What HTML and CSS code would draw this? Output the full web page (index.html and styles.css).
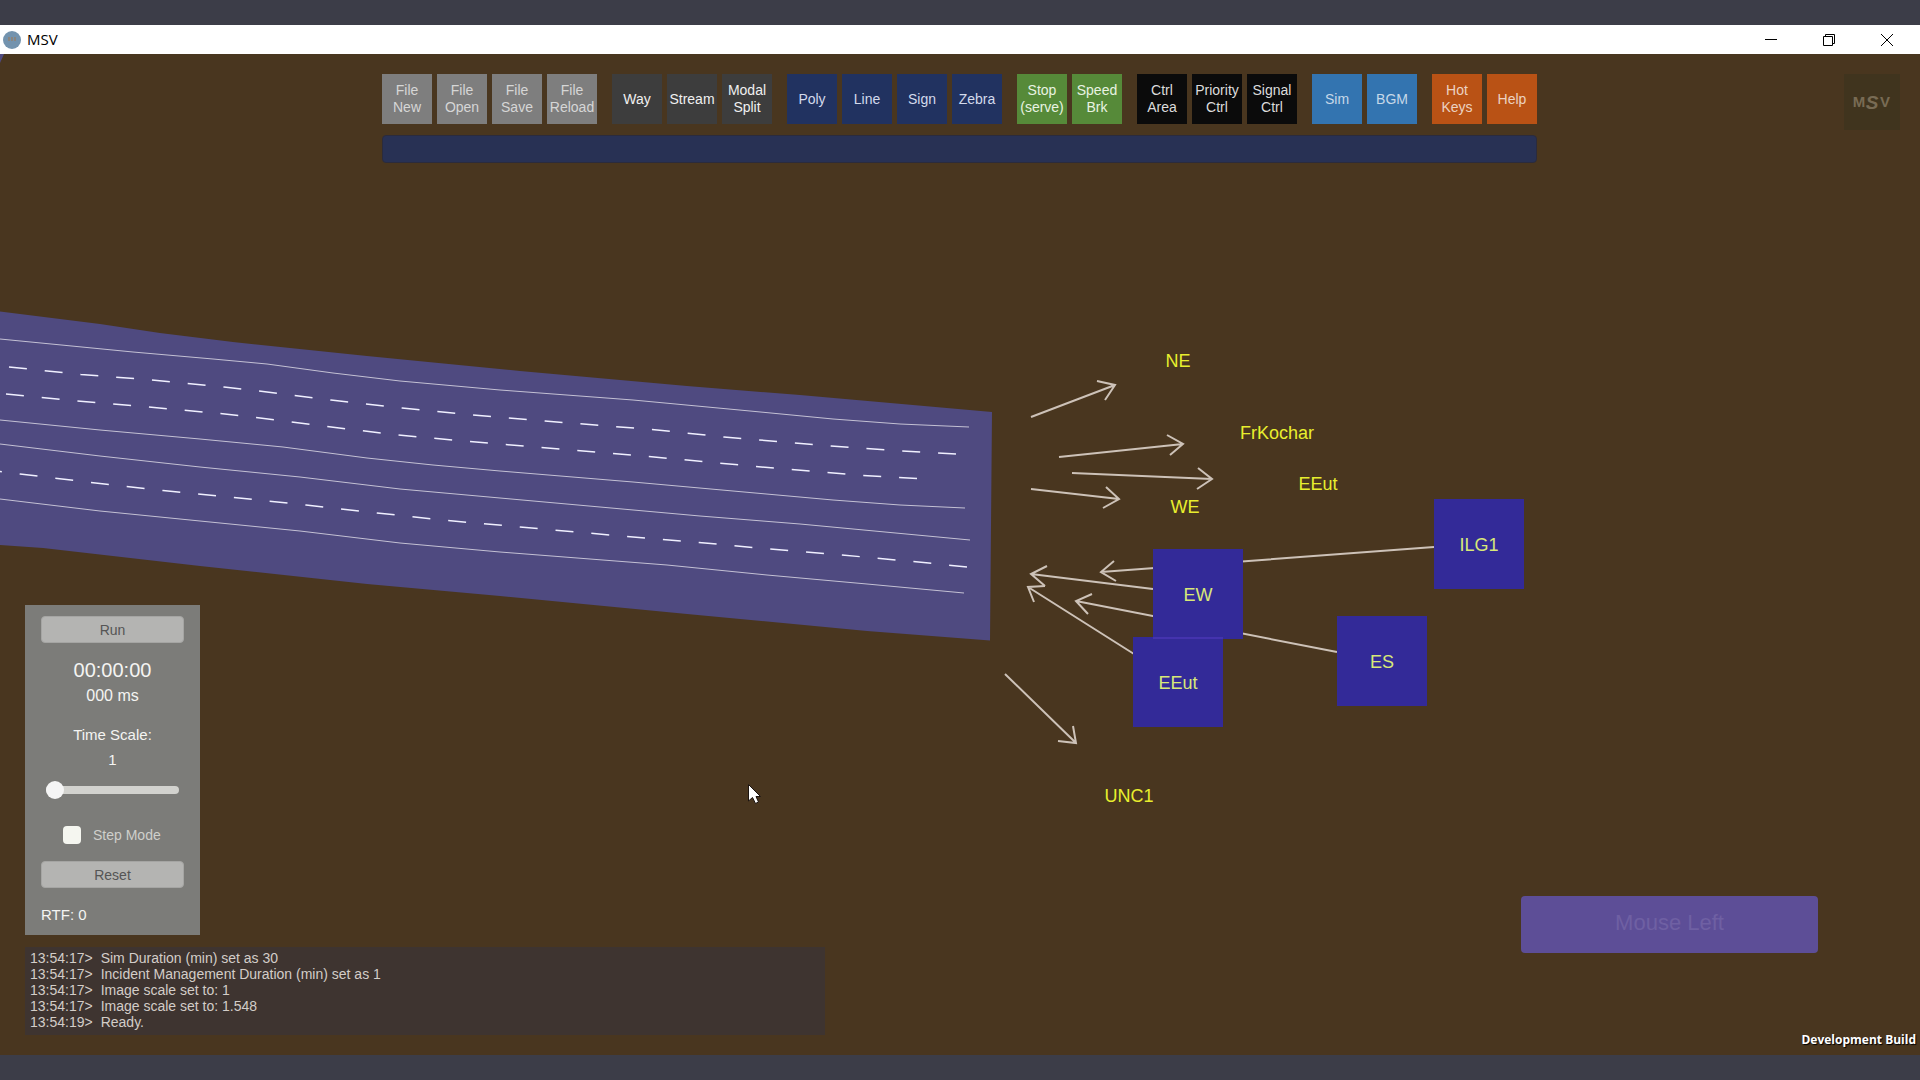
FILE: index.html
```
<!DOCTYPE html>
<html lang="en">
<head>
    <meta charset="utf-8">
    <title>MSV</title>
    <link rel="stylesheet" href="styles.css">
</head>
<body>
    <div class="window">
        <div class="titlebar">
            <svg class="app-icon" width="18" height="18" viewBox="0 0 18 18">
                <circle cx="9" cy="9" r="9" fill="#7393ae"/>
                <path d="M5 7h8M5 9h8" stroke="#8a857f" stroke-width="2" stroke-dasharray="2 1"/>
            </svg>
            <span class="app-name">MSV</span>
            <div class="window-buttons">
                <button type="button" aria-label="Minimize">
                    <svg width="12" height="12" viewBox="0 0 12 12"><path d="M0 5.5h12"/></svg>
                </button>
                <button type="button" aria-label="Restore">
                    <svg width="12" height="12" viewBox="0 0 12 12"><path d="M.5 2.5h9v9h-9zM2.5 2.5v-2h9v9h-2"/></svg>
                </button>
                <button type="button" aria-label="Close">
                    <svg width="12" height="12" viewBox="0 0 12 12"><path d="M0 0l12 12M12 0L0 12"/></svg>
                </button>
            </div>
        </div>

        <div class="stage">
            <svg class="map" viewBox="0 54 1920 1001" preserveAspectRatio="xMinYMin slice">
                <!-- road surface -->
                <path class="road" d="M0 54H4L0 63Z"/>
                <path class="road" d="M0 311.5L100 324L160 333L233 342L367 356L520 371L687 386L800 395L992 412L990 640.5L867 631L687 614L500 596L367 584L200 566L43 548L0 545Z"/>

                <!-- solid lane lines -->
                <path class="lane" d="M0 339L133 352L213 359L267 364L333 373L400 381L500 390L633 400L750 411L833 419L900 424L969 427"/>
                <path class="lane" d="M0 420L100 430L200 439L283 447L367 458L433 465L500 471L633 482L733 491L833 500L900 505L965 508"/>
                <path class="lane" d="M0 444L100 456L200 467L300 477L400 489L500 498L700 516L800 524L970 540"/>
                <path class="lane" d="M0 499L100 511L200 521L300 531L400 543L500 552L667 565L767 575L867 584L964 593"/>

                <!-- dashed lane lines, one unit of pathLength per dash or gap -->
                <path class="lane dashed" pathLength="53" d="M9 367L81 374.5L152 380L224 387L259 391L331 400L402 408L473 415L545 421L652 429.5L724 437L831 446L902 451L956 454"/>
                <path class="lane dashed" pathLength="51" d="M6 394L77 401L149 407L220 413.5L256 417.5L327 426.5L398 435L470 441.5L541 447.5L649 456.5L756 466.5L863 475.5L917 478.5"/>
                <path class="lane dashed" pathLength="55" d="M-16 469.5L20 474L91 482.5L163 490.5L234 497.5L306 505L377 513L448 520.5L520 527L627 536.5L699 542.5L770 549L842 555L913 561.5L967 567"/>

                <!-- stream arrows -->
                <g class="arrow">
                    <path d="M1031 417L1115 385M1097 381L1115 385L1105 400"/>
                    <path d="M1059 457L1183 444M1167 435L1183 444L1170 455"/>
                    <path d="M1072 473L1212 479M1198 468L1212 479L1197 489"/>
                    <path d="M1031 489L1119 499M1106 487L1119 499L1103 508"/>
                    <path d="M1434 547L1101 572M1114 561L1101 572L1116 581"/>
                    <path d="M1153 589L1031 574M1047 566L1031 574L1045 586"/>
                    <path d="M1134 654L1028 587M1045 586L1028 587L1034 602"/>
                    <path d="M1337 652L1076 601M1092 594L1076 601L1088 614"/>
                    <path d="M1005 674L1076 743M1073 726L1076 743L1058 741"/>
                </g>

                <!-- stream source nodes -->
                <g class="node">
                    <rect x="1434" y="499" width="90" height="90"/>
                    <rect x="1153" y="549" width="90" height="90"/>
                    <rect x="1337" y="616" width="90" height="90"/>
                    <rect x="1133" y="637" width="90" height="90"/>
                    <rect class="overlap" x="1153" y="637" width="70" height="2"/>
                    <text x="1479" y="551">ILG1</text>
                    <text x="1198" y="601">EW</text>
                    <text x="1382" y="668">ES</text>
                    <text x="1178" y="689">EEut</text>
                </g>

                <g class="exit">
                    <text x="1178" y="367">NE</text>
                    <text x="1277" y="439">FrKochar</text>
                    <text x="1318" y="490">EEut</text>
                    <text x="1185" y="513">WE</text>
                    <text x="1129" y="802">UNC1</text>
                </g>

                <path class="cursor" d="M748.500 784.500V801L752.500 797.500L755.500 803.500L758.500 802L756 796.500H760.500Z"/>
            </svg>

            <div class="hud-top">
                <div class="tools">
                    <div class="toolbar">
                        <div class="group file">
                            <button type="button">File<br>New</button>
                            <button type="button">File<br>Open</button>
                            <button type="button">File<br>Save</button>
                            <button type="button">File<br>Reload</button>
                        </div>
                        <div class="group traffic">
                            <button type="button">Way</button>
                            <button type="button">Stream</button>
                            <button type="button">Modal<br>Split</button>
                        </div>
                        <div class="group draw">
                            <button type="button">Poly</button>
                            <button type="button">Line</button>
                            <button type="button">Sign</button>
                            <button type="button">Zebra</button>
                        </div>
                        <div class="group stops">
                            <button type="button">Stop<br>(serve)</button>
                            <button type="button">Speed<br>Brk</button>
                        </div>
                        <div class="group control">
                            <button type="button">Ctrl<br>Area</button>
                            <button type="button">Priority<br>Ctrl</button>
                            <button type="button">Signal<br>Ctrl</button>
                        </div>
                        <div class="group sim">
                            <button type="button">Sim</button>
                            <button type="button">BGM</button>
                        </div>
                        <div class="group help">
                            <button type="button">Hot<br>Keys</button>
                            <button type="button">Help</button>
                        </div>
                    </div>
                    <input class="command" type="text" aria-label="Command">
                </div>
                <svg class="logo" width="56" height="56" viewBox="0 0 56 56">
                    <text x="15" y="33">M</text>
                    <text class="logo-s" x="28" y="35">S</text>
                    <text x="41" y="33">V</text>
                </svg>
            </div>

            <div class="hud-bottom">
                <div class="left">
                    <form class="panel">
                        <button class="action" type="button">Run</button>
                        <div class="clock">00:00:00</div>
                        <div class="millis">000 ms</div>
                        <label class="scale-label" for="timeScale">Time Scale:</label>
                        <output class="scale-value" for="timeScale">1</output>
                        <input class="slider" type="range" id="timeScale" min="1" max="10" value="1">
                        <div class="step">
                            <input type="checkbox" id="stepMode">
                            <label for="stepMode">Step Mode</label>
                        </div>
                        <button class="action" type="button">Reset</button>
                        <div class="rtf">RTF: 0</div>
                    </form>
                    <div class="log">
                        <div class="entry"><span>13:54:17&gt;</span><span>Sim Duration (min) set as 30</span></div>
                        <div class="entry"><span>13:54:17&gt;</span><span>Incident Management Duration (min) set as 1</span></div>
                        <div class="entry"><span>13:54:17&gt;</span><span>Image scale set to: 1</span></div>
                        <div class="entry"><span>13:54:17&gt;</span><span>Image scale set to: 1.548</span></div>
                        <div class="entry"><span>13:54:19&gt;</span><span>Ready.</span></div>
                    </div>
                </div>
                <div class="mouse-hint">Mouse Left</div>
            </div>
            <div class="build">Development Build</div>
        </div>
    </div>
</body>
</html>
```

FILE: styles.css
```
* {
    box-sizing: border-box;
}

body {
    margin: 0;
    padding: 25px 0;
    height: 100vh;
    background-color: #3c3d48;
    font-family: "Liberation Sans", Arial, sans-serif;
    font-size: 14px;
    overflow: hidden;
}

button, input {
    font: inherit;
    margin: 0;
}

.window {
    display: flex;
    flex-direction: column;
    height: 100%;
}

/* Title bar */
.titlebar {
    display: flex;
    align-items: center;
    height: 29px;
    padding: 0 4px 0 3px;
    background-color: #fff;
}

.app-name {
    margin-left: 6px;
    font-family: "Open Sans", "Noto Sans", sans-serif;
    font-size: 15px;
    line-height: 29px;
    color: #000;
}

.window-buttons {
    display: flex;
    height: 100%;
    margin-left: auto;
}

.window-buttons button {
    display: flex;
    align-items: center;
    justify-content: center;
    width: 58px;
    padding: 0;
    border: none;
    background: none;
}

.window-buttons path {
    fill: none;
    stroke: #000;
}

/* Map */
.stage {
    position: relative;
    display: flex;
    flex: 1;
    flex-direction: column;
    justify-content: space-between;
    padding: 20px 0;
    background-color: #49361f;
    overflow: hidden;
}

.map {
    position: absolute;
    top: 0;
    left: 0;
    width: 100%;
    height: 100%;
}

.road {
    fill: #4f4a80;
}

.lane {
    fill: none;
    stroke: #c4c1d4;
    stroke-width: 1;
}

.dashed {
    stroke: #f0f0ff;
    stroke-width: 1.5;
    stroke-dasharray: 1 1;
}

.arrow {
    fill: none;
    stroke: #cdc2b8;
    stroke-width: 2;
}

.node rect {
    fill: #332a98;
}

.node .overlap {
    fill: #4433ae;
}

.map text {
    font-size: 18px;
    text-anchor: middle;
}

.node text {
    fill: #d8e878;
}

.exit text {
    fill: #e8ee2e;
}

.cursor {
    fill: #fff;
    stroke: #1c1410;
}

/* Toolbar */
.hud-top {
    position: relative;
    display: grid;
    grid-template-columns: 1fr auto 1fr;
    padding: 0 20px 0 19px;
}

.tools {
    grid-column: 2;
}

.toolbar {
    display: flex;
    gap: 15px;
}

.group {
    display: flex;
    gap: 5px;
}

.group button {
    width: 50px;
    height: 50px;
    padding: 0;
    border: none;
    line-height: 17px;
    white-space: nowrap;
}

.file button {
    background-color: #7e7e7e;
    color: #d6d6d6;
}

.traffic button {
    background-color: #3d3d3d;
    color: #f0f0f0;
}

.draw button {
    background-color: #213260;
    color: #d3daec;
}

.stops button {
    background-color: #568a39;
    color: #e9f3e2;
}

.control button {
    background-color: #0b0b0b;
    color: #dcdcdc;
}

.sim button {
    background-color: #3374b0;
    color: #c6d8e8;
}

.help button {
    background-color: #b95215;
    color: #ecd2c2;
}

.command {
    display: block;
    width: 100%;
    height: 28px;
    margin-top: 11px;
    padding: 0 8px;
    border: 1px solid #2b2b3c;
    border-radius: 4px;
    background-color: #283154;
    color: #d3daec;
}

.logo {
    justify-self: end;
    background-color: #40341e;
}

.logo text {
    font-size: 15px;
    font-weight: bold;
    text-anchor: middle;
    fill: #786b54;
}

.logo .logo-s {
    font-size: 19px;
    font-style: italic;
}

/* Simulation panel and log */
.hud-bottom {
    position: relative;
    display: flex;
    align-items: flex-end;
    justify-content: space-between;
    padding: 0 102px 0 25px;
}

.panel {
    display: flex;
    flex-direction: column;
    width: 175px;
    padding: 11px 16px 10px;
    background-color: #7c7c79;
    color: #f4f4f2;
    font-size: 15px;
    line-height: 20px;
    text-align: center;
}

.action {
    height: 27px;
    padding: 0;
    border: 1px solid #a5a5a3;
    border-radius: 4px;
    background-color: #b4b4b2;
    color: #555;
    font-size: 14px;
}

.clock {
    margin-top: 16px;
    font-size: 20px;
    line-height: 22px;
}

.millis {
    margin-top: 5px;
    font-size: 16px;
}

.scale-label {
    margin-top: 19px;
}

.scale-value {
    margin-top: 5px;
}

.slider {
    appearance: none;
    height: 18px;
    margin: 11px 5px 0;
    background: none;
}

.slider::-webkit-slider-runnable-track {
    height: 8px;
    border-radius: 4px;
    background-color: #d2d2ce;
}

.slider::-webkit-slider-thumb {
    appearance: none;
    width: 18px;
    height: 18px;
    margin-top: -5px;
    border-radius: 50%;
    background-color: #f5f5f5;
}

.step {
    display: flex;
    align-items: center;
    gap: 12px;
    height: 18px;
    margin: 27px 0 17px 22px;
    color: #cfcfcb;
    font-size: 14px;
}

.step input {
    appearance: none;
    width: 18px;
    height: 18px;
    border-radius: 4px;
    background-color: #f5f6f0;
}

.rtf {
    margin-top: 17px;
    text-align: left;
}

.log {
    width: 800px;
    margin-top: 12px;
    padding: 3px 5px 5px;
    background-color: #3e3430;
    color: #d3cdc8;
    line-height: 16px;
}

.entry {
    display: flex;
    gap: 8px;
}

.mouse-hint {
    width: 297px;
    margin-bottom: 82px;
    padding-bottom: 4px;
    border-radius: 4px;
    background-color: #5d4e97;
    color: #6f60a3;
    font-size: 22px;
    line-height: 53px;
    text-align: center;
}

.build {
    position: absolute;
    right: 4px;
    bottom: 5px;
    color: #fff;
    font-family: "Open Sans", "Noto Sans", sans-serif;
    font-size: 12px;
    font-weight: bold;
    line-height: 20px;
    text-shadow: 1px 1px 1px #000;
}
```
